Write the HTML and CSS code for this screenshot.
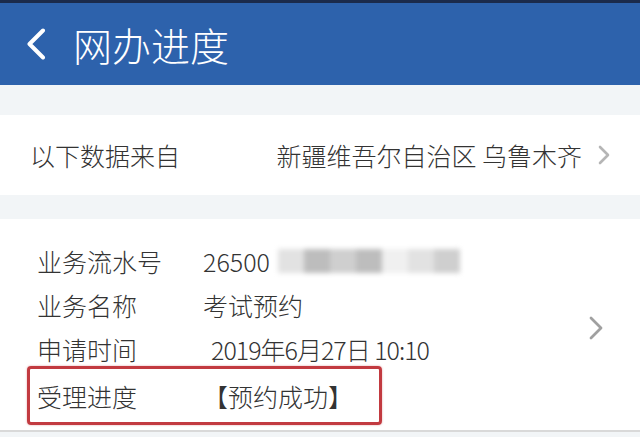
FILE: index.html
```html
<!DOCTYPE html>
<html lang="zh-CN">
<head>
    <meta charset="UTF-8">
    <meta name="viewport" content="width=device-width, initial-scale=1.0">
    <title>网办进度</title>
    <link rel="stylesheet" href="styles.css">
</head>
<body>
    <div class="header">
        <svg class="back" width="20" height="32" viewBox="0 0 20 32">
            <polyline points="17,2.5 3.5,16 17,29.5" fill="none" stroke="#fff" stroke-width="4" stroke-linecap="round" stroke-linejoin="round"/>
        </svg>
        <span class="title">网办进度</span>
    </div>

    <div class="source">
        <span class="source-label">以下数据来自</span>
        <span class="source-value">新疆维吾尔自治区 乌鲁木齐</span>
        <svg class="arrow" width="14" height="22" viewBox="0 0 14 22">
            <polyline points="3,3 11,11 3,19" fill="none" stroke="#b5b5b5" stroke-width="2.6" stroke-linecap="round" stroke-linejoin="round"/>
        </svg>
    </div>

    <div class="card">
        <div class="rows">
            <div class="row">
                <span class="label">业务流水号</span>
                <span class="value">26500<span class="masked"><i class="m1"></i><i class="m2"></i><i class="m3"></i><i class="m2"></i><i class="m4"></i><i class="m1"></i><i class="m3"></i></span></span>
            </div>
            <div class="row">
                <span class="label">业务名称</span>
                <span class="value">考试预约</span>
            </div>
            <div class="row">
                <span class="label">申请时间</span>
                <span class="value date">2019年6月27日 10:10</span>
            </div>
            <div class="row highlight">
                <span class="label">受理进度</span>
                <span class="value">【预约成功】</span>
            </div>
        </div>
        <svg class="arrow card-arrow" width="16" height="26" viewBox="0 0 16 26">
            <polyline points="3,3 13,13 3,23" fill="none" stroke="#a0a0a0" stroke-width="2.8" stroke-linecap="round" stroke-linejoin="round"/>
        </svg>
    </div>
</body>
</html>
```

FILE: styles.css
```css
body {
    margin: 0;
    background-color: #f2f5f7;
    font-family: "Noto Sans CJK SC", "Noto Sans", sans-serif;
    font-weight: 300;
    color: #333;
}
.header {
    display: flex;
    align-items: center;
    height: 82px;
    padding-left: 26px;
    background: #2d62ac;
    border-top: 3px solid #1b2b4c;
}
.back {
    display: block;
}
.title {
    margin-left: 27px;
    font-size: 39px;
    line-height: 1;
    color: #fff;
}
.source {
    display: flex;
    align-items: center;
    height: 80px;
    margin-top: 30px;
    padding: 0 29px 0 30px;
    background: #fff;
    font-size: 25px;
}
.source-label {
    flex: 1;
}
.source-value {
    margin-right: 15px;
}
.arrow {
    display: block;
}
.card {
    display: flex;
    align-items: center;
    margin-top: 24px;
    padding: 20px 36px 5px 27px;
    background: #fff;
    border-bottom: 2px solid #d9d9d9;
}
.rows {
    flex: 1;
}
.row {
    display: flex;
    align-items: center;
    height: 44px;
    padding-left: 10px;
    font-size: 25px;
}
.label {
    width: 166px;
}
.value {
    display: flex;
    align-items: center;
}
.date {
    padding-left: 8px;
    letter-spacing: -1px;
}
.masked {
    display: flex;
    margin-left: 8px;
    filter: blur(2.5px);
}
.masked i {
    display: block;
    width: 26px;
    height: 24px;
}
.masked .m1 { background: #e2e2e2; }
.masked .m2 { background: #bdbdbd; }
.masked .m3 { background: #cfcfcf; }
.masked .m4 { background: #f0f0f0; }
.highlight {
    width: 342px;
    height: 53px;
    margin-top: -5px;
    padding-left: 7px;
    border: 3px solid #c23a40;
    border-radius: 4px;
    box-shadow: 0 0 2px rgba(194, 58, 64, 0.5);
}
.card-arrow {
    margin-top: -8px;
}
```
